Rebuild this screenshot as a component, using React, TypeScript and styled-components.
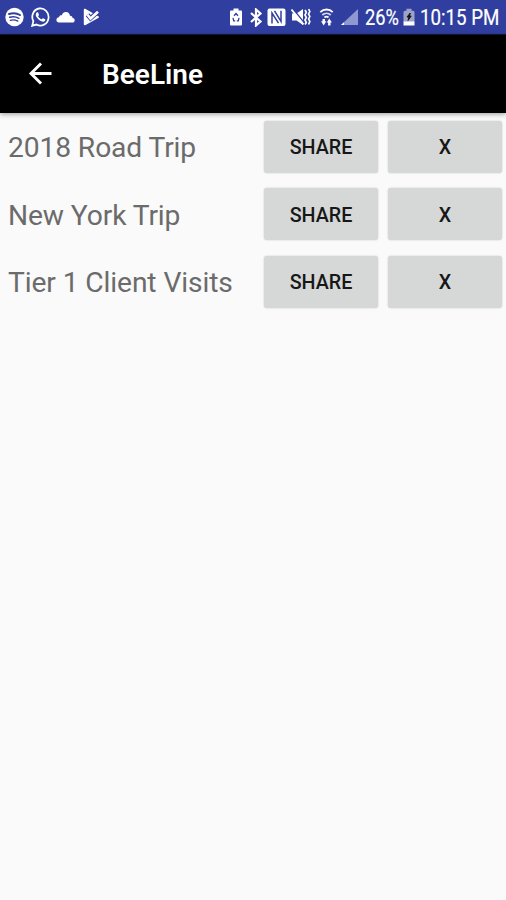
import React from "react";
import styled, { createGlobalStyle } from "styled-components";

const GlobalStyle = createGlobalStyle`
  * { box-sizing: border-box; }
  body { margin: 0; background: #fafafa; font-family: Roboto, "Liberation Sans", sans-serif; }
`;

const Screen = styled.div`
  display: flex;
  flex-direction: column;
  width: 506px;
  height: 900px;
  overflow: hidden;
  background: #fafafa;
`;

const StatusBar = styled.header`
  display: flex;
  align-items: center;
  flex: 0 0 35px;
  height: 35px;
  padding: 0 6px 0 5px;
  background: #303f9f;
  border-bottom: 1px solid #10153a;
  color: #fff;
`;

const StatusGroup = styled.div<{ $end?: boolean }>`
  display: flex;
  align-items: center;
  margin-left: ${(p) => (p.$end ? "auto" : "0")};
`;

const Icon = styled.svg<{ $gap: number }>`
  display: block;
  flex: none;
  margin-right: ${(p) => p.$gap}px;
`;

const StatusText = styled.div<{ $width: number; $scale: number }>`
  width: ${(p) => p.$width}px;
  height: 24px;
  font-size: 21.5px;
  line-height: 25px;
  white-space: nowrap;

  span {
    display: inline-block;
    transform: scaleX(${(p) => p.$scale});
    transform-origin: left;
    -webkit-text-stroke: 0.2px #fff;
  }
`;

const AppBar = styled.nav`
  display: flex;
  align-items: center;
  flex: 0 0 78px;
  padding-left: 28px;
  background: #000;
  color: #fff;
  box-shadow: 0 1px 5px rgba(0, 0, 0, 0.4);
`;

const BackButton = styled.button`
  display: block;
  width: 24px;
  height: 24px;
  margin-right: 50px;
  padding: 0;
  border: 0;
  background: none;
  color: #fff;
`;

const Title = styled.h1`
  margin: 0;
  padding-top: 1px;
  font-size: 28px;
  font-weight: 600;
  line-height: 32px;
`;

const TripList = styled.ul`
  margin: 0;
  padding: 0;
  list-style: none;
`;

const TripRow = styled.li`
  display: grid;
  grid-template-columns: 1fr 114px 114px;
  column-gap: 10px;
  align-items: center;
  height: 67.5px;
  padding: 0 4px 0 8px;
`;

const TripName = styled.span`
  padding-top: 3px;
  font-size: 28.2px;
  letter-spacing: -0.1px;
  line-height: 34px;
  color: #6b6b6b;
  white-space: nowrap;
`;

const ActionButton = styled.button`
  height: 52px;
  padding: 3px 0 0;
  border: 0;
  border-radius: 3px;
  background: #d6d7d7;
  box-shadow: 0 0 2px rgba(0, 0, 0, 0.2);
  color: #171717;
  font: 500 19.7px/24px Roboto, "Liberation Sans", sans-serif;
`;

const trips = ["2018 Road Trip", "New York Trip", "Tier 1 Client Visits"];

const NotificationIcons = () => (
  <StatusGroup>
    <Icon $gap={7} width="19" height="20" viewBox="0 0 19 20">
      <circle cx="9.5" cy="10" r="9.2" fill="#fff" />
      <g fill="none" stroke="#303f9f" strokeLinecap="round">
        <path d="M4 7c4-1.2 8-.8 11 1" strokeWidth="2" />
        <path d="M4.7 10.3c3.5-1 6.5-.5 9.2 1" strokeWidth="1.5" />
        <path d="M5.3 13.3c3-.7 5.3-.3 7.5.8" strokeWidth="1.3" />
      </g>
    </Icon>
    <Icon $gap={6} width="19" height="20" viewBox="0 0 24 24" preserveAspectRatio="none">
      <path fill="#fff" d="M17.472 14.382c-.297-.149-1.758-.867-2.03-.967-.273-.099-.471-.148-.67.15-.197.297-.767.966-.94 1.164-.173.199-.347.223-.644.075-.297-.15-1.255-.463-2.39-1.475-.883-.788-1.48-1.761-1.653-2.059-.173-.297-.018-.458.13-.606.134-.133.298-.347.446-.52.149-.174.198-.298.298-.497.099-.198.05-.371-.025-.52-.075-.149-.669-1.612-.916-2.207-.242-.579-.487-.5-.669-.51-.173-.008-.371-.01-.57-.01-.198 0-.52.074-.792.372-.272.297-1.04 1.016-1.04 2.479 0 1.462 1.065 2.875 1.213 3.074.149.198 2.096 3.2 5.077 4.487.709.306 1.262.489 1.694.625.712.227 1.36.195 1.871.118.571-.085 1.758-.719 2.006-1.413.248-.694.248-1.289.173-1.413-.074-.124-.272-.198-.57-.347" />
      <path fill="none" stroke="#fff" strokeWidth="2.2" d="M1.5 22.5 3 17.1A10.3 10.3 0 1 1 7 21z" />
    </Icon>
    <Icon $gap={8} width="19" height="12" viewBox="0 0 19 12">
      <path fill="#fff" d="M3 11.5C1.5 11.5.4 10.5.4 9c0-1.400.9-2.500 2.500-2.700C3.300 4.600 4.500 4 5.800 4.200 6.800 1.800 8.200.8 10 1c2.200.1 3.700 1.500 4 3.700 1.500 0 2.400.8 2.600 2.200 1.400.2 2.100 1.100 2.100 2.300 0 1.400-1 2.300-2.300 2.300z" />
    </Icon>
    <Icon $gap={0} width="17" height="18" viewBox="0 0 17 18">
      <path fill="#fff" d="M.8 2C.8.8 1.600.6 2.600 1.100l12.700 7.200c1 .5 1 1.100 0 1.700L2.600 16.900c-1 .5-1.800.2-1.800-.9z" />
      <path d="m4.500 6.800 3 3.500L16 3" fill="none" stroke="#303f9f" strokeWidth="4.500" />
      <path d="m4.500 6.800 3 3.700L15 3.800" fill="none" stroke="#fff" strokeWidth="2.600" />
    </Icon>
  </StatusGroup>
);

const SystemIcons = () => (
  <>
    <Icon $gap={6} width="14" height="18" viewBox="0 0 14 18">
      <path fill="#fff" d="M4.500.5h5v2H12q1 0 1 1v13q0 1-1 1H2q-1 0-1-1v-13q0-1 1-1h2.500z" />
      <path d="m5 7.800 2-2.300 2 2.300M4 9.800l.7 3H6.200m3.800-3-.7 3H7.800" fill="none" stroke="#303f9f" strokeWidth="1.300" />
    </Icon>
    <Icon $gap={4} width="14" height="19" viewBox="0 0 14 19">
      <path d="m2 5 9.500 8.500L7 17.500v-16l4.500 4L2 14" fill="none" stroke="#fff" strokeWidth="2.200" />
    </Icon>
    <Icon $gap={4} width="19" height="18" viewBox="0 0 19 18">
      <rect x=".5" y=".5" width="18" height="17.500" rx="2" fill="#fff" />
      <path d="M5 15.500V5l6.500 10.200M14 2.800v10.500L7.500 2.800" fill="none" stroke="#303f9f" strokeWidth="1.500" />
    </Icon>
    <Icon $gap={8} width="21" height="18" viewBox="0 0 21 18">
      <path fill="#fff" d="M2 5.500h4.500L13 1v16l-6.500-4.500H2z" />
      <path d="m3 1 11 13.500" stroke="#303f9f" strokeWidth="1.300" />
      <path d="m1.500 1.500 12 15" stroke="#fff" strokeWidth="2" />
      <path d="m15 2 1.300 2.300L15 7l1.300 2.500L15 12l1.300 2.500-1.300 2M18.600 1 19.800 3.500 18.600 6l1.200 2.500-1.200 2.500 1.200 2.500-1.200 3" fill="none" stroke="#fff" strokeWidth="1.700" />
    </Icon>
    <Icon $gap={6} width="15" height="18" viewBox="0 0 15 18">
      <g fill="none" stroke="#fff" strokeWidth="1.800">
        <path d="M1.300 4.200c3.500-3.600 9-3.600 12.400 0" />
        <path d="M3.300 7c2.400-2.300 6-2.300 8.400 0" opacity=".8" />
        <path d="M5.500 9.500c1.200-1 2.800-1 4 0" />
      </g>
      <path fill="#fff" d="M2 13.300h1.500V11H6v2.300h1.300L4.700 17.500zM7.700 14.500l2.600-4 2.600 4h-1.400v3H9.100v-3z" />
    </Icon>
    <Icon $gap={6} width="19" height="18" viewBox="0 0 19 18">
      <path d="M18 1v16H1z" fill="#8f98d0" />
      <path d="M4 14.200V17H1z" fill="#fff" />
    </Icon>
  </>
);

const ChargingIcon = () => (
  <Icon $gap={5} width="12" height="18" viewBox="0 0 12 18">
    <path fill="#9da3c7" d="M3.500.8h5v2H10q1.500 0 1.500 1.500V14H.5V4.300Q.5 2.800 2 2.800h1.500z" />
    <path fill="#fff" d="M.5 13.500h11v4H.5z" />
    <path d="M7.300 5 4 9h2l-1 3.500L8.200 8H6.300z" fill="#101319" stroke="#101319" />
  </Icon>
);

export default function App() {
  return (
    <>
      <GlobalStyle />
      <Screen>
        <StatusBar>
          <NotificationIcons />
          <StatusGroup $end>
            <SystemIcons />
            <StatusText $width={38} $scale={0.85}><span>26%</span></StatusText>
            <ChargingIcon />
            <StatusText $width={80} $scale={0.87}><span>10:15 PM</span></StatusText>
          </StatusGroup>
        </StatusBar>
        <AppBar>
          <BackButton aria-label="Back">
            <svg width="24" height="24" viewBox="0 0 24 24" fill="none" stroke="currentColor" strokeWidth="2.900">
              <path d="M23.500 11.500H3M13 1.500l-10 10 10 10" />
            </svg>
          </BackButton>
          <Title>BeeLine</Title>
        </AppBar>
        <TripList>
          {trips.map((name) => (
            <TripRow key={name}>
              <TripName>{name}</TripName>
              <ActionButton>SHARE</ActionButton>
              <ActionButton>X</ActionButton>
            </TripRow>
          ))}
        </TripList>
      </Screen>
    </>
  );
}
